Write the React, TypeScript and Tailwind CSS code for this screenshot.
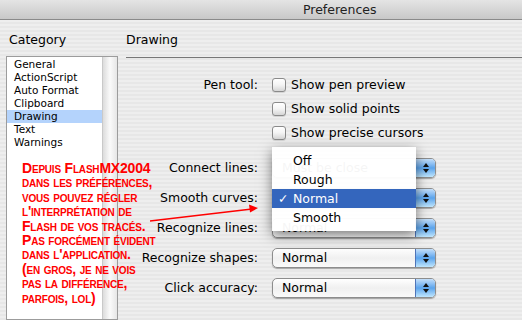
import React from 'react';

const categories = ['General', 'ActionScript', 'Auto Format', 'Clipboard', 'Drawing', 'Text', 'Warnings'];

const note = [
	'Depuis FlashMX2004',
	'dans les préférences,',
	'vous pouvez régler',
	"l'interprétation de",
	'Flash de vos tracés.',
	'Pas forcément évident',
	"dans l'application.",
	'(en gros, je ne vois',
	'pas la différence,',
	'parfois, lol)',
];

function Checkbox({ label }: { label: string }) {
	return (
		<div className="flex items-center gap-[5px]">
			<div className="h-[14px] w-[14px] rounded-[3px] border border-[#8a8a8a] bg-gradient-to-b from-white via-[#f4f4f4] to-[#d6d6d6] shadow-[0_1px_0_rgba(0,0,0,0.1)]" />
			<span>{label}</span>
		</div>
	);
}

function Select({ value }: { value: string }) {
	return (
		<div className="flex h-[20px] w-[164px] items-center overflow-hidden rounded-[5px] border border-[#8d8d8d] bg-gradient-to-b from-white via-[#f0f0f0] to-[#fafafa] shadow-[0_1px_1px_rgba(0,0,0,0.3)]">
			<span className="flex-1 pl-[9px]">{value}</span>
			<div className="flex h-full w-[20px] flex-col items-center justify-center gap-[2px] border-l border-[#4f74b8] bg-gradient-to-b from-[#c4dffa] via-[#5ba4ec] to-[#bfe6fd]">
				<svg width="6" height="4" viewBox="0 0 6 4"><path d="M3 0L6 4H0z" fill="#111" /></svg>
				<svg width="6" height="4" viewBox="0 0 6 4"><path d="M0 0H6L3 4z" fill="#111" /></svg>
			</div>
		</div>
	);
}

export default function App() {
	return (
		<div className="relative h-[320px] w-[522px] overflow-hidden bg-[repeating-linear-gradient(180deg,#eeeeee_0px,#eeeeee_2px,#e7e7e7_2px,#e7e7e7_4px)] font-['DejaVu_Sans',sans-serif] text-[12.5px] text-black">
			{/* title bar */}
			<div className="h-[20px] border-b border-[#8a8a8a] bg-gradient-to-b from-[#e4e4e4] to-[#c8c8c8] pl-[303px] pt-[1px] leading-[18px] text-[#222]">
				Preferences
			</div>

			<div className="flex">
				{/* category column */}
				<div className="w-[126px] pl-[6px]">
					<div className="pl-[3px] pt-[12px] leading-[16px]">Category</div>
					<div className="mt-[8px] flex h-[264px] w-[112px] border border-[#9c9c9c] bg-white">
						<div className="flex-1 pt-[1px] text-[10.5px]">
							{categories.map((c) => (
								<div key={c} className={'h-[13px] pl-[7px] leading-[13px] ' + (c === 'Drawing' ? 'bg-[#b4d3fc]' : '')}>
									{c}
								</div>
							))}
						</div>
						<div className="w-[15px] border-l border-[#c9c9c9] bg-gradient-to-r from-[#dcdcdc] via-[#fafafa] to-[#e6e6e6]" />
					</div>
				</div>

				{/* drawing panel */}
				<div className="flex-1">
					<div className="pt-[12px] leading-[16px]">Drawing</div>
					<div className="mt-[9px] border-t border-[#777]" />
					<div className="grid grid-cols-[132px_1fr] gap-x-[14px] pt-[15px]">
						<div className="flex h-[24px] items-center justify-end">Pen tool:</div>
						<div className="flex h-[24px] items-center"><Checkbox label="Show pen preview" /></div>
						<div />
						<div className="flex h-[24px] items-center"><Checkbox label="Show solid points" /></div>
						<div />
						<div className="flex h-[24px] items-center"><Checkbox label="Show precise cursors" /></div>

						{[
							['Connect lines:', 'Must be close'],
							['Smooth curves:', 'Normal'],
							['Recognize lines:', 'Normal'],
							['Recognize shapes:', 'Normal'],
							['Click accuracy:', 'Normal'],
						].map(([label, value], i) => (
							<React.Fragment key={label}>
								<div className={'flex h-[20px] items-center justify-end ' + (i === 0 ? 'mt-[13px]' : 'mt-[10px]')}>{label}</div>
								<div className={i === 0 ? 'mt-[13px]' : 'mt-[10px]'}><Select value={value} /></div>
							</React.Fragment>
						))}
					</div>
				</div>
			</div>

			{/* popup menu */}
			<div className="absolute left-[272px] top-[147px] w-[144px] bg-white/[0.96] py-[4px] shadow-[0_4px_12px_rgba(0,0,0,0.5)]">
				{['Off', 'Rough', 'Normal', 'Smooth'].map((o) => (
					<div key={o} className={'relative h-[19px] pl-[21px] leading-[19px] ' + (o === 'Normal' ? 'bg-[#3466bd] text-white' : '')}>
						{o === 'Normal' && <span className="absolute left-[6px] top-0 font-bold">✓</span>}
						{o}
					</div>
				))}
			</div>

			{/* annotation */}
			<div className="absolute left-[22px] top-[161px] font-['Liberation_Sans',sans-serif] text-[14px] font-bold leading-[14.4px] tracking-[-0.2px] text-[#ff0000] [font-variant-caps:small-caps]">
				{note.map((l) => (
					<div key={l}>{l}</div>
				))}
			</div>
			<svg className="absolute left-0 top-0" width="522" height="320">
				<line x1="150" y1="221" x2="252" y2="209" stroke="#ff0000" strokeWidth="1.5" />
				<path d="M258 208 L249 204.5 L250 212.5 Z" fill="#ff0000" />
			</svg>
		</div>
	);
}
